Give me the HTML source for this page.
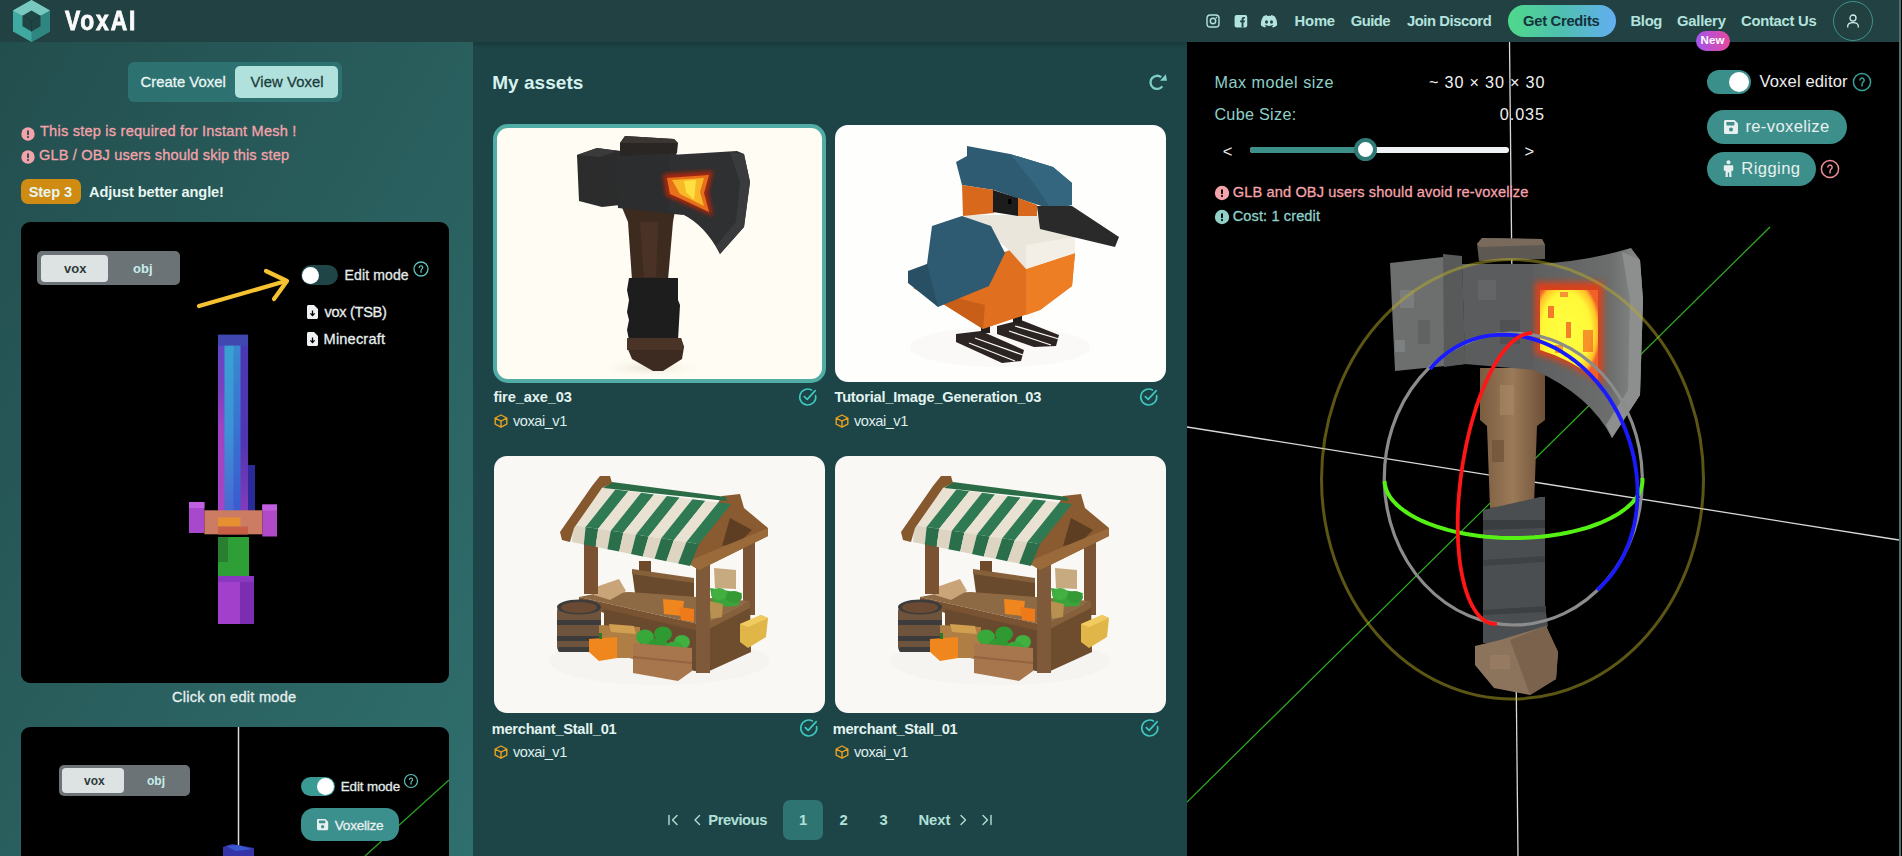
<!DOCTYPE html><html><head><meta charset="utf-8"><style>
*{margin:0;padding:0;box-sizing:border-box}
html,body{width:1902px;height:856px;overflow:hidden;background:#1d4446;font-family:"Liberation Sans",sans-serif}
.a{position:absolute}
.t{position:absolute;line-height:1;white-space:nowrap}
svg{position:absolute;overflow:visible}
</style></head><body>
<div class="a" style="left:0;top:42px;width:473px;height:814px;background:linear-gradient(to bottom right,#234e4e,#2f6f6d)"></div>
<div class="a" style="left:473px;top:42px;width:714px;height:814px;background:#1d4446"></div>
<div class="a" style="left:1187px;top:42px;width:715px;height:814px;background:#000"></div>
<div class="a" style="left:1901px;top:0;width:1px;height:856px;background:#000"></div>
<div class="a" style="left:0;top:0;width:1899px;height:42px;background:#224142"></div>
<div class="a" style="left:1899px;top:0;width:2px;height:856px;background:#4a706d"></div>
<svg style="left:0;top:0" width="60" height="42" viewBox="0 0 60 42">
<polygon points="31.5,0 50,10.5 50,31.5 31.5,42 13,31.5 13,10.5" fill="#3fa9a2"/>
<polygon points="31.5,0 50,10.5 31.5,21 13,10.5" fill="#78c8c0"/>
<polygon points="50,10.5 50,31.5 31.5,42 31.5,21" fill="#2f8580"/>
<polygon points="31.5,10.5 40.5,15.75 40.5,26.25 31.5,31.5 22.5,26.25 22.5,15.75" fill="#1f4444"/>
<polyline points="22.5,15.75 31.5,21 40.5,15.75" fill="none" stroke="#16393a" stroke-width="0.8"/>
<line x1="31.5" y1="21" x2="31.5" y2="31.5" stroke="#16393a" stroke-width="0.8"/>
</svg>
<div class="t" style="left:65px;top:6px;font-size:28.5px;font-weight:700;color:#fafafa;letter-spacing:2.3px;-webkit-text-stroke:0.9px #fafafa;transform:scaleX(0.8);transform-origin:0 0">VoxAI</div>
<svg style="left:1206px;top:14px" width="14" height="14" viewBox="0 0 14 14">
<rect x="1" y="1" width="12" height="12" rx="3.3" fill="none" stroke="#b3e3de" stroke-width="1.4"/>
<circle cx="7" cy="7" r="2.7" fill="none" stroke="#b3e3de" stroke-width="1.4"/>
<circle cx="10.4" cy="3.6" r="0.8" fill="#b3e3de"/></svg>
<svg style="left:1234px;top:14px" width="14" height="14" viewBox="0 0 14 14">
<rect x="0.6" y="1" width="12.6" height="12.4" rx="2" fill="#b3e3de"/>
<path d="M7.6 13.4V8.3H6.1V6.4H7.6V5.1C7.6 3.6 8.4 2.9 9.8 2.9H11V4.6H10.1C9.6 4.6 9.5 4.9 9.5 5.3V6.4H11L10.7 8.3H9.5V13.4Z" fill="#224142"/></svg>
<svg style="left:1260px;top:14px" width="18" height="14" viewBox="0 0 18 14">
<path d="M14.6 2.2A14 14 0 0 0 11.2 1.1L10.8 2A13 13 0 0 0 7.2 2L6.8 1.1A14 14 0 0 0 3.4 2.2C1.3 5.3 0.7 8.4 1 11.4A14 14 0 0 0 5.2 13.5L6.1 12.1A9 9 0 0 1 4.7 11.4L5.1 11.1A10 10 0 0 0 12.9 11.1L13.3 11.4A9 9 0 0 1 11.9 12.1L12.8 13.5A14 14 0 0 0 17 11.4C17.4 7.9 16.5 4.9 14.6 2.2Z" fill="#b3e3de"/>
<ellipse cx="6.5" cy="8" rx="1.5" ry="1.7" fill="#224142"/><ellipse cx="11.5" cy="8" rx="1.5" ry="1.7" fill="#224142"/></svg>
<div class="a" style="left:1508px;top:5px;width:108px;height:32px;border-radius:16px;background:linear-gradient(90deg,#4fd98a,#4fbfb0 50%,#63aef2)"></div>
<div class="a" style="left:1696px;top:31px;width:34px;height:20px;border-radius:10px;background:linear-gradient(90deg,#a455ee,#e5489e)"></div>
<div class="t" style="left:1700.5px;top:35px;font-size:11.5px;font-weight:700;color:#fff;letter-spacing:0.1px">New</div>
<div class="a" style="left:1833px;top:1px;width:40px;height:40px;border-radius:50%;border:1px solid #3c948d;background:#21403f"></div>
<svg style="left:1845px;top:13px" width="16" height="16" viewBox="0 0 16 16">
<circle cx="8" cy="5" r="3" fill="none" stroke="#d0eeea" stroke-width="1.3"/>
<path d="M2.7 14.5V13.3C2.7 11 4.6 9.6 8 9.6S13.3 11 13.3 13.3V14.5" fill="none" stroke="#d0eeea" stroke-width="1.3"/></svg>
<div class="t" style="left:1294.5px;top:13.5px;font-size:14.8px;font-weight:600;color:#b3e3de;letter-spacing:-0.17px;">Home</div>
<div class="t" style="left:1350.7px;top:13.5px;font-size:14.8px;font-weight:600;color:#b3e3de;letter-spacing:-0.53px;">Guide</div>
<div class="t" style="left:1407.0px;top:13.5px;font-size:14.8px;font-weight:600;color:#b3e3de;letter-spacing:-0.45px;">Join Discord</div>
<div class="t" style="left:1523.0px;top:13.5px;font-size:14.8px;font-weight:600;color:#14323a;letter-spacing:-0.30px;">Get Credits</div>
<div class="t" style="left:1630.5px;top:13.5px;font-size:14.8px;font-weight:600;color:#b3e3de;letter-spacing:-0.33px;">Blog</div>
<div class="t" style="left:1677.0px;top:13.5px;font-size:14.8px;font-weight:600;color:#b3e3de;letter-spacing:-0.22px;">Gallery</div>
<div class="t" style="left:1741.0px;top:13.5px;font-size:14.8px;font-weight:600;color:#b3e3de;letter-spacing:-0.27px;">Contact Us</div>
<div class="a" style="left:128px;top:62px;width:214px;height:40px;border-radius:6px;background:#2d7271"></div>
<div class="a" style="left:235px;top:66px;width:103px;height:32px;border-radius:5px;background:#b0e1dc"></div>
<div class="t" style="left:140.5px;top:74.5px;font-size:14.8px;font-weight:500;color:#eaf6f3;letter-spacing:0.05px;-webkit-text-stroke:0.3px #eaf6f3;">Create Voxel</div>
<div class="t" style="left:250.6px;top:74.5px;font-size:14.8px;font-weight:500;color:#1c3b3b;letter-spacing:0.10px;-webkit-text-stroke:0.3px #1c3b3b;">View Voxel</div>
<svg style="left:20px;top:125.5px" width="16" height="16" viewBox="0 0 16 16"><circle cx="8" cy="8" r="6.7" fill="#f4a3ab"/><rect x="7.05" y="4.3" width="1.9" height="4.9" rx="0.9" fill="#24504f"/><circle cx="8" cy="11.1" r="1.05" fill="#24504f"/></svg>
<svg style="left:20px;top:149.3px" width="16" height="16" viewBox="0 0 16 16"><circle cx="8" cy="8" r="6.7" fill="#f4a3ab"/><rect x="7.05" y="4.3" width="1.9" height="4.9" rx="0.9" fill="#24504f"/><circle cx="8" cy="11.1" r="1.05" fill="#24504f"/></svg>
<div class="t" style="left:40.0px;top:124.2px;font-size:14.6px;font-weight:500;color:#f4a3ab;letter-spacing:0.21px;-webkit-text-stroke:0.3px #f4a3ab;">This step is required for Instant Mesh !</div>
<div class="t" style="left:39.0px;top:148.3px;font-size:14.6px;font-weight:500;color:#f4a3ab;letter-spacing:0.14px;-webkit-text-stroke:0.3px #f4a3ab;">GLB / OBJ users should skip this step</div>
<div class="a" style="left:21px;top:179px;width:60px;height:25px;border-radius:7px;background:#d08b12"></div>
<div class="t" style="left:28.7px;top:184.6px;font-size:14.6px;font-weight:700;color:#e6f6f0;letter-spacing:-0.08px;">Step 3</div>
<div class="t" style="left:89.0px;top:184.6px;font-size:14.6px;font-weight:700;color:#e6f6f0;letter-spacing:-0.11px;">Adjust better angle!</div>
<div class="a" style="left:21px;top:222px;width:428px;height:461px;border-radius:9px;background:#000"></div>
<div class="a" style="left:37px;top:251px;width:143px;height:34px;border-radius:5px;background:#6b7377"></div>
<div class="a" style="left:41px;top:254.5px;width:67px;height:27.5px;border-radius:4px;background:#dde3e3"></div>
<div class="t" style="left:64px;top:262px;font-size:13px;font-weight:700;color:#2d3b3c">vox</div>
<div class="t" style="left:133px;top:262px;font-size:13px;font-weight:700;color:#c8ecea">obj</div>
<div class="a" style="left:301px;top:265px;width:37px;height:20px;border-radius:10px;background:#1f4546"></div>
<div class="a" style="left:302px;top:266.5px;width:17px;height:17px;border-radius:50%;background:#fff"></div>
<div class="t" style="left:344.5px;top:267.7px;font-size:14px;font-weight:500;color:#e3eaea;letter-spacing:0.14px;-webkit-text-stroke:0.3px #e3eaea;">Edit mode</div>
<svg style="left:411px;top:258.5px" width="20" height="20" viewBox="0 0 20 20"><circle cx="10" cy="10" r="7" fill="none" stroke="#5fc3bb" stroke-width="1.3"/><path d="M8.25 8.43a1.75 1.75 0 1 1 2.62 1.66c-0.88 0.53-0.88 1.05-0.88 2.27" fill="none" stroke="#5fc3bb" stroke-width="1.23" stroke-linecap="round"/><circle cx="10" cy="13.15" r="0.72" fill="#5fc3bb"/></svg>
<svg style="left:0;top:0" width="473" height="856" viewBox="0 0 473 856">
<g stroke="#f6c232" stroke-width="4.2" stroke-linecap="round" stroke-linejoin="round" fill="none">
<line x1="199" y1="306" x2="286" y2="281"/><polyline points="266,271 287,281 274,299"/></g></svg>
<svg style="left:307px;top:305px" width="11" height="14" viewBox="0 0 11 14"><path d="M1.5 0H7L11 4V12.5C11 13.3 10.3 14 9.5 14H1.5C0.7 14 0 13.3 0 12.5V1.5C0 0.7 0.7 0 1.5 0Z" fill="#eef2f2"/><path d="M5.5 5.5V10.3M3.4 8.4L5.5 10.5L7.6 8.4" stroke="#000" stroke-width="1.3" fill="none"/></svg>
<div class="t" style="left:324.6px;top:304.8px;font-size:14.6px;font-weight:500;color:#e8eeee;letter-spacing:-0.33px;-webkit-text-stroke:0.3px #e8eeee;">vox (TSB)</div>
<svg style="left:307px;top:332px" width="11" height="14" viewBox="0 0 11 14"><path d="M1.5 0H7L11 4V12.5C11 13.3 10.3 14 9.5 14H1.5C0.7 14 0 13.3 0 12.5V1.5C0 0.7 0.7 0 1.5 0Z" fill="#eef2f2"/><path d="M5.5 5.5V10.3M3.4 8.4L5.5 10.5L7.6 8.4" stroke="#000" stroke-width="1.3" fill="none"/></svg>
<div class="t" style="left:323.6px;top:331.6px;font-size:14.6px;font-weight:500;color:#e8eeee;letter-spacing:0.17px;-webkit-text-stroke:0.3px #e8eeee;">Minecraft</div>
<svg style="left:0;top:0" width="473" height="856" viewBox="0 0 473 856">
<defs>
<linearGradient id="swl" x1="0" x2="0" y1="0" y2="1"><stop offset="0" stop-color="#5a48c8"/><stop offset="0.3" stop-color="#7a40c0"/><stop offset="0.5" stop-color="#a042c4"/><stop offset="1" stop-color="#a844c8"/></linearGradient>
<linearGradient id="swc" x1="0" x2="0" y1="0" y2="1"><stop offset="0" stop-color="#38a2d2"/><stop offset="0.5" stop-color="#3c92d6"/><stop offset="1" stop-color="#4a64d0"/></linearGradient>
<linearGradient id="swc2" x1="0" x2="0" y1="0" y2="1"><stop offset="0" stop-color="#3a88d0"/><stop offset="1" stop-color="#3a5ad0"/></linearGradient>
<linearGradient id="swr" x1="0" x2="0" y1="0" y2="1"><stop offset="0" stop-color="#4a38b4"/><stop offset="0.6" stop-color="#5036b0"/><stop offset="1" stop-color="#8a3cbc"/></linearGradient>
</defs>
<rect x="218" y="335" width="7.5" height="183" fill="url(#swl)"/>
<rect x="224.5" y="345" width="9.5" height="173" fill="url(#swc)"/>
<rect x="233.5" y="345" width="7.5" height="173" fill="url(#swc2)"/>
<rect x="240.5" y="335" width="7.6" height="183" fill="url(#swr)"/>
<rect x="218" y="334.6" width="30" height="11" fill="#4048b0"/>
<rect x="248" y="465" width="7" height="53" fill="#2a2a98"/>
<rect x="189" y="502" width="15.4" height="31" fill="#a848cc"/>
<rect x="189" y="502" width="15.4" height="6" fill="#c060e0"/>
<rect x="262.3" y="504.5" width="14.7" height="32" fill="#b04ac8"/>
<rect x="262.3" y="504.5" width="14.7" height="6" fill="#c060e0"/>
<rect x="204.4" y="510.3" width="57.9" height="24" fill="#cc7c62"/>
<rect x="218" y="517.5" width="22.5" height="9" fill="#e69032"/>
<rect x="218" y="526.5" width="30" height="8" fill="#c86048"/>
<rect x="218" y="537" width="31" height="41" fill="#2e9e36"/>
<rect x="218" y="537" width="10" height="25" fill="#2a7e30"/>
<rect x="218" y="576" width="36" height="48" fill="#a23fcb"/>
<rect x="240" y="576" width="14" height="48" fill="#7b2eb0"/>
<rect x="218" y="576" width="36" height="6" fill="#8a38c0"/>
</svg>
<div class="t" style="left:172.0px;top:689.6px;font-size:14.6px;font-weight:500;color:#e6f0ef;letter-spacing:0.24px;-webkit-text-stroke:0.3px #e6f0ef;">Click on edit mode</div>
<div class="a" style="left:21px;top:727px;width:428px;height:140px;border-radius:9px;background:#000;overflow:hidden"></div>
<svg style="left:0;top:0" width="473" height="856" viewBox="0 0 473 856">
<line x1="238.5" y1="727" x2="238.5" y2="849" stroke="#d9d9d9" stroke-width="1.5"/>
<line x1="449" y1="780" x2="365" y2="856" stroke="#2aa020" stroke-width="1.3"/>
<polygon points="223,847 232,844 254,848 254,856 223,856" fill="#3434a8"/><polygon points="226,846 238,845 252,849 236,851" fill="#3a58d0"/>
</svg>
<div class="a" style="left:59px;top:765px;width:130.5px;height:31px;border-radius:5px;background:#6b7377"></div>
<div class="a" style="left:62px;top:768px;width:62px;height:25px;border-radius:4px;background:#dde3e3"></div>
<div class="t" style="left:84px;top:775px;font-size:12px;font-weight:700;color:#2d3b3c">vox</div>
<div class="t" style="left:147px;top:775px;font-size:12px;font-weight:700;color:#c8ecea">obj</div>
<div class="a" style="left:301px;top:777px;width:34px;height:19px;border-radius:10px;background:#3a9a94"></div>
<div class="a" style="left:317px;top:778px;width:17px;height:17px;border-radius:50%;background:#fff"></div>
<div class="t" style="left:340.8px;top:779.7px;font-size:13.4px;font-weight:500;color:#e3eaea;letter-spacing:-0.12px;-webkit-text-stroke:0.3px #e3eaea;">Edit mode</div>
<svg style="left:401.3px;top:771px" width="20" height="20" viewBox="0 0 20 20"><circle cx="10" cy="10" r="6.5" fill="none" stroke="#5fc3bb" stroke-width="1.2"/><path d="M8.38 8.54a1.62 1.62 0 1 1 2.44 1.54c-0.81 0.49-0.81 0.97-0.81 2.11" fill="none" stroke="#5fc3bb" stroke-width="1.14" stroke-linecap="round"/><circle cx="10" cy="12.93" r="0.66" fill="#5fc3bb"/></svg>
<div class="a" style="left:301px;top:808px;width:98px;height:32.5px;border-radius:13px;background:#3b8f8c"></div>
<svg style="left:317px;top:819.3px" width="11.2" height="11.2" viewBox="0 0 14 14"><path d="M1.5 0H10.5L14 3.5V12.5C14 13.3 13.3 14 12.5 14H1.5C0.7 14 0 13.3 0 12.5V1.5C0 0.7 0.7 0 1.5 0Z" fill="#e8f0ef"/><rect x="2.4" y="2" width="8" height="3.4" rx="0.6" fill="#3b8f8c"/><circle cx="7" cy="9.6" r="2" fill="#3b8f8c"/></svg>
<div class="t" style="left:334.8px;top:818.5px;font-size:13.6px;font-weight:500;color:#e8f0ef;letter-spacing:-0.26px;-webkit-text-stroke:0.3px #e8f0ef;">Voxelize</div>
<div class="a" style="left:473px;top:42px;width:714px;height:6px;background:linear-gradient(#183a3b,rgba(29,68,70,0))"></div>
<div class="t" style="left:492.2px;top:72.9px;font-size:19px;font-weight:700;color:#d5f2ee;letter-spacing:0.04px;">My assets</div>
<svg style="left:1149px;top:73px" width="18" height="18" viewBox="0 0 18 18">
<path d="M12.2 4.2A6.6 6.6 0 1 0 13.3 13.4" fill="none" stroke="#7fcfc8" stroke-width="2.3"/>
<polygon points="11,7.7 18,7.7 16.8,1.2" fill="#7fcfc8"/></svg>
<div class="a" style="left:493px;top:124px;width:333px;height:259px;border-radius:15px;background:#fffcf3;border:4px solid #52aca6;overflow:hidden"></div>

<svg style="left:497px;top:128px" width="325" height="251" viewBox="497 128 325 251">
<defs><filter id="cg1" x="-40%" y="-40%" width="180%" height="180%"><feGaussianBlur stdDeviation="2.2"/></filter>
<radialGradient id="sh1" cx="0.5" cy="0.5" r="0.5"><stop offset="0" stop-color="#e8e2d4"/><stop offset="1" stop-color="#fffcf3" stop-opacity="0"/></radialGradient></defs>
<ellipse cx="650" cy="368" rx="55" ry="10" fill="url(#sh1)"/>
<!-- handle brown -->
<polygon points="621,205 676,205 673,222 668,280 632,280 628,222" fill="#3e2b20"/>
<polygon points="640,222 658,222 656,277 644,277" fill="#4d3628" opacity="0.8"/>
<!-- wrap -->
<polygon points="629,278 678,278 678,300 680,305 678,340 629,340 627,330 629,320 627,312 629,300 627,290" fill="#1d1d1d"/>
<!-- pommel -->
<polygon points="627,338 681,338 684,347 682,359 663,371 653,371 632,359 627,347" fill="#3d2b21"/>
<polygon points="627,338 681,338 684,347 682,350 627,350" fill="#4a3427"/>
<!-- butt -->
<polygon points="577,155 597,148 620,151 620,205 602,207 579,201" fill="#2c2c2d"/>
<polygon points="577,155 597,148 619,151 600,157" fill="#3a3a3a"/>
<!-- center -->
<polygon points="614,151 676,150 683,215 618,208" fill="#2b2d2f"/>
<!-- blade -->
<path d="M670,155 Q705,153 737,151 L744,154 L750,182 L744,227 L720,254 Q705,225 682,214 L670,212 Z" fill="#2f3032"/>
<path d="M730,152 L744,154 L750,182 L744,227 L720,254 L716,246 L736,222 L740,182 Z" fill="#3a3b3d"/>
<!-- fire -->
<polygon points="663,174 713,171 708,193 713,216 676,200 666,196" fill="#a8280a" filter="url(#cg1)"/>
<polygon points="667,178 709,175 704,193 709,212 677,197 670,194" fill="#e8701a"/>
<polygon points="672,180 704,178 700,192 704,206 680,194" fill="#f8b828"/><polygon points="684,181 696,180 694,200 686,192" fill="#ffe040"/>
<!-- top cap -->
<polygon points="620,143 625,136 674,139 678,143 677,153 620,156" fill="#2a2624"/>
<polygon points="620,143 625,136 674,139 678,143" fill="#3b3632"/>
</svg>
<div class="a" style="left:835px;top:125px;width:331px;height:257px;border-radius:13px;background:#fefefd;overflow:hidden"></div>

<svg style="left:835px;top:125px" width="331" height="257" viewBox="0 0 331 257">
<ellipse cx="165" cy="222" rx="90" ry="20" fill="#f6f5f3" opacity="0.6"/>
<!-- legs -->
<polygon points="162,201 186,195 224,210 221,221 199,222 162,209" fill="#2b2422"/>
<polygon points="121,209 146,206 189,225 186,236 167,238 121,217" fill="#2b2422"/>
<rect x="146" y="194" width="9" height="14" fill="#231d1b"/>
<g stroke="#f8f7f4" stroke-width="1.3"><line x1="140" y1="213" x2="188" y2="230"/><line x1="134" y1="218" x2="180" y2="236"/><line x1="180" y1="201" x2="224" y2="214"/><line x1="174" y1="206" x2="216" y2="220"/></g>
<rect x="178" y="186" width="9" height="12" fill="#231d1b"/>
<!-- orange body -->
<polygon points="175,125 240,128 237,161 205,185 148,204 105,177 78,163 95,155" fill="#e07020"/>
<polygon points="191,140 240,128 237,161 205,185 191,190" fill="#ee7e24"/>
<polygon points="110,170 150,180 148,204 105,177" fill="#c85e18"/>
<!-- white throat -->
<polygon points="128,90 202,90 240,112 240,128 191,144 175,126 146,101" fill="#ebe6dc"/>
<polygon points="191,120 240,112 240,128 191,144" fill="#f3efe7"/>
<!-- head -->
<polygon points="132,21 175,29 218,42 237,58 237,80 216,84 194,77 159,65 127,60 121,37 132,31" fill="#2e5a72"/>
<polygon points="175,29 218,42 237,58 237,80 216,84 200,60" fill="#356680"/>
<!-- orange face -->
<polygon points="127,60 159,65 159,88 128,91" fill="#d8681c"/>
<polygon points="183,73 202,80 202,91 183,91" fill="#d8681c"/>
<!-- eye stripe -->
<polygon points="158,65 183,73 183,91 158,87" fill="#1c1c1c"/>
<rect x="173" y="74" width="3.5" height="5" fill="#000"/>
<!-- beak -->
<polygon points="202,81 237,81 284,112 280,122 205,104" fill="#2a2a2a"/>
<!-- wing -->
<polygon points="97,101 127,91 156,101 170,128 154,161 103,182 73,152 92,139" fill="#2e5a72"/>
<polygon points="73,146 92,139 103,182 73,158" fill="#284f64"/>
</svg>
<div class="a" style="left:494px;top:456px;width:331px;height:257px;border-radius:13px;background:#f9f8f5;overflow:hidden"></div>
<div class="a" style="left:835px;top:456px;width:331px;height:257px;border-radius:13px;background:#f9f8f5;overflow:hidden"></div>

<svg style="left:494px;top:456px" width="331" height="257" viewBox="0 0 331 257">
<g>
<ellipse cx="165" cy="205" rx="110" ry="24" fill="#efeeea" opacity="0.35"/>
<!-- back posts -->
<rect x="249" y="84" width="12" height="75" fill="#7a5434"/>
<rect x="145" y="105" width="12" height="14" fill="#6e4a2a"/>
<!-- back shelf -->
<polygon points="138,115 200,124 200,143 141,137" fill="#6a4a2c"/>
<polygon points="138,113 200,122 200,127 138,118" fill="#86603a"/>
<!-- goods behind counter -->
<polygon points="220,112 242,114 242,133 221,132" fill="#c8aa80"/>
<!-- counter top -->
<polygon points="85,141 105,137 136,136 256,145 209,169" fill="#8e6a44"/>
<!-- counter faces -->
<polygon points="85,141 209,169 209,180 110,157 85,147" fill="#7a5432"/>
<polygon points="110,153 209,176 211,217 110,197" fill="#6a4a2e"/>
<polygon points="209,169 256,145 257,196 211,217" fill="#6e4c2e"/>
<polygon points="209,169 256,145 256,152 209,176" fill="#86603a"/>
<!-- right goods -->
<polygon points="216,132 248,137 244,150 220,151" fill="#3aa43a"/>
<ellipse cx="225" cy="138" rx="8" ry="6" fill="#42b040"/>
<ellipse cx="240" cy="141" rx="8" ry="6" fill="#349a36"/>
<polygon points="215,145 229,148 228,161 217,163" fill="#b89050"/>
<!-- oranges -->
<polygon points="169,143 190,145 188,160 170,158" fill="#f0861e"/>
<polygon points="185,151 200,153 200,166 187,164" fill="#ee7a1a"/>
<!-- bread -->
<polygon points="99,132 125,123 132,135 116,144 100,139" fill="#c8a478"/>
<!-- posts -->
<rect x="90" y="88" width="14" height="50" fill="#7a5232"/>
<rect x="202" y="106" width="14" height="111" fill="#7e5a3a"/>
<!-- barrel -->
<rect x="63" y="150" width="44" height="46" rx="5" fill="#6e543c"/>
<ellipse cx="85" cy="151" rx="22" ry="7.5" fill="#3c3c3c"/>
<ellipse cx="85" cy="151.5" rx="18" ry="5.5" fill="#6a4a32"/>
<rect x="63" y="164" width="44" height="5" fill="#3c3c3c"/>
<rect x="63" y="180" width="44" height="5" fill="#3c3c3c"/>
<rect x="64" y="191" width="42" height="5" rx="2" fill="#3c3c3c"/>
<!-- basket -->
<polygon points="105,169 146,171 146,202 121,202 105,190" fill="#ae7e44"/>
<polygon points="115,168 140,170 142,178 117,176" fill="#d0a050"/>
<!-- crate + greens -->
<ellipse cx="151" cy="181" rx="9" ry="7.5" fill="#38a83a"/>
<ellipse cx="169" cy="178" rx="9" ry="7.5" fill="#2f9a32"/>
<ellipse cx="188" cy="186" rx="8" ry="7" fill="#40b040"/>
<ellipse cx="164" cy="189" rx="10" ry="7" fill="#2f9a32"/>
<ellipse cx="180" cy="192" rx="9" ry="6.5" fill="#38a83a"/>
<polygon points="139,187 198,192 198,215 184,225 139,217" fill="#a8764c"/>
<polygon points="139,200 198,206 198,208 139,202" fill="#946440"/>
<!-- pumpkin -->
<polygon points="95,183 123,181 123,202 105,205 95,196" fill="#f0861e"/>
<rect x="105" y="177" width="3" height="6" fill="#2a7a20"/>
<!-- hay -->
<polygon points="246,168 267,159 274,162 272,181 254,192 246,186" fill="#e0b648"/>
<polygon points="246,168 267,159 274,162 254,171" fill="#f0cc60"/>
<!-- gable / right frame -->
<polygon points="228,40 246,38 250,52 262,62 274,72 274,80 205,114 192,106 218,58" fill="#8a5a30"/>
<polygon points="236,62 258,74 246,86 228,90" fill="#5e3e22"/>
<polygon points="192,106 274,72 274,80 205,114" fill="#9a6a3a"/>
<!-- awning -->
<polygon points="108.6,32.0 121.4,33.6 91.6,70.9 79.0,69.0" fill="#e9e1d1"/>
<polygon points="79.0,69.0 91.6,70.9 89.8,88.4 78.0,86.0" fill="#ddd4c2"/>
<polygon points="121.4,33.6 134.3,35.2 104.2,72.8 91.6,70.9" fill="#2f7a52"/>
<polygon points="91.6,70.9 104.2,72.8 101.6,90.8 89.8,88.4" fill="#2a6e4a"/>
<polygon points="134.3,35.2 147.1,36.8 116.8,74.7 104.2,72.8" fill="#e9e1d1"/>
<polygon points="104.2,72.8 116.8,74.7 113.4,93.2 101.6,90.8" fill="#ddd4c2"/>
<polygon points="147.1,36.8 160.0,38.4 129.4,76.6 116.8,74.7" fill="#2f7a52"/>
<polygon points="116.8,74.7 129.4,76.6 125.2,95.6 113.4,93.2" fill="#2a6e4a"/>
<polygon points="160.0,38.4 172.8,40.0 142.0,78.5 129.4,76.6" fill="#e9e1d1"/>
<polygon points="129.4,76.6 142.0,78.5 137.0,98.0 125.2,95.6" fill="#ddd4c2"/>
<polygon points="172.8,40.0 185.7,41.6 154.6,80.4 142.0,78.5" fill="#2f7a52"/>
<polygon points="142.0,78.5 154.6,80.4 148.8,100.4 137.0,98.0" fill="#2a6e4a"/>
<polygon points="185.7,41.6 198.5,43.2 167.2,82.3 154.6,80.4" fill="#e9e1d1"/>
<polygon points="154.6,80.4 167.2,82.3 160.6,102.8 148.8,100.4" fill="#ddd4c2"/>
<polygon points="198.5,43.2 211.4,44.8 179.8,84.2 167.2,82.3" fill="#2f7a52"/>
<polygon points="167.2,82.3 179.8,84.2 172.4,105.2 160.6,102.8" fill="#2a6e4a"/>
<polygon points="211.4,44.8 224.2,46.4 192.4,86.1 179.8,84.2" fill="#e9e1d1"/>
<polygon points="179.8,84.2 192.4,86.1 184.2,107.6 172.4,105.2" fill="#ddd4c2"/>
<polygon points="224.2,46.4 237.1,48.0 205.0,88.0 192.4,86.1" fill="#2f7a52"/>
<polygon points="192.4,86.1 205.0,88.0 196.0,110.0 184.2,107.6" fill="#2a6e4a"/>
<polygon points="118,26 232,41 233,45 109,32" fill="#2b6c46"/>
<!-- left stair edge -->
<polygon points="106,20 116,20 118,27 108,32 80,72 76,86 68,84 66,76 98,30" fill="#86582e"/>
</g></svg>
<svg style="left:835px;top:456px" width="331" height="257" viewBox="0 0 331 257">
<g>
<ellipse cx="165" cy="205" rx="110" ry="24" fill="#efeeea" opacity="0.35"/>
<!-- back posts -->
<rect x="249" y="84" width="12" height="75" fill="#7a5434"/>
<rect x="145" y="105" width="12" height="14" fill="#6e4a2a"/>
<!-- back shelf -->
<polygon points="138,115 200,124 200,143 141,137" fill="#6a4a2c"/>
<polygon points="138,113 200,122 200,127 138,118" fill="#86603a"/>
<!-- goods behind counter -->
<polygon points="220,112 242,114 242,133 221,132" fill="#c8aa80"/>
<!-- counter top -->
<polygon points="85,141 105,137 136,136 256,145 209,169" fill="#8e6a44"/>
<!-- counter faces -->
<polygon points="85,141 209,169 209,180 110,157 85,147" fill="#7a5432"/>
<polygon points="110,153 209,176 211,217 110,197" fill="#6a4a2e"/>
<polygon points="209,169 256,145 257,196 211,217" fill="#6e4c2e"/>
<polygon points="209,169 256,145 256,152 209,176" fill="#86603a"/>
<!-- right goods -->
<polygon points="216,132 248,137 244,150 220,151" fill="#3aa43a"/>
<ellipse cx="225" cy="138" rx="8" ry="6" fill="#42b040"/>
<ellipse cx="240" cy="141" rx="8" ry="6" fill="#349a36"/>
<polygon points="215,145 229,148 228,161 217,163" fill="#b89050"/>
<!-- oranges -->
<polygon points="169,143 190,145 188,160 170,158" fill="#f0861e"/>
<polygon points="185,151 200,153 200,166 187,164" fill="#ee7a1a"/>
<!-- bread -->
<polygon points="99,132 125,123 132,135 116,144 100,139" fill="#c8a478"/>
<!-- posts -->
<rect x="90" y="88" width="14" height="50" fill="#7a5232"/>
<rect x="202" y="106" width="14" height="111" fill="#7e5a3a"/>
<!-- barrel -->
<rect x="63" y="150" width="44" height="46" rx="5" fill="#6e543c"/>
<ellipse cx="85" cy="151" rx="22" ry="7.5" fill="#3c3c3c"/>
<ellipse cx="85" cy="151.5" rx="18" ry="5.5" fill="#6a4a32"/>
<rect x="63" y="164" width="44" height="5" fill="#3c3c3c"/>
<rect x="63" y="180" width="44" height="5" fill="#3c3c3c"/>
<rect x="64" y="191" width="42" height="5" rx="2" fill="#3c3c3c"/>
<!-- basket -->
<polygon points="105,169 146,171 146,202 121,202 105,190" fill="#ae7e44"/>
<polygon points="115,168 140,170 142,178 117,176" fill="#d0a050"/>
<!-- crate + greens -->
<ellipse cx="151" cy="181" rx="9" ry="7.5" fill="#38a83a"/>
<ellipse cx="169" cy="178" rx="9" ry="7.5" fill="#2f9a32"/>
<ellipse cx="188" cy="186" rx="8" ry="7" fill="#40b040"/>
<ellipse cx="164" cy="189" rx="10" ry="7" fill="#2f9a32"/>
<ellipse cx="180" cy="192" rx="9" ry="6.5" fill="#38a83a"/>
<polygon points="139,187 198,192 198,215 184,225 139,217" fill="#a8764c"/>
<polygon points="139,200 198,206 198,208 139,202" fill="#946440"/>
<!-- pumpkin -->
<polygon points="95,183 123,181 123,202 105,205 95,196" fill="#f0861e"/>
<rect x="105" y="177" width="3" height="6" fill="#2a7a20"/>
<!-- hay -->
<polygon points="246,168 267,159 274,162 272,181 254,192 246,186" fill="#e0b648"/>
<polygon points="246,168 267,159 274,162 254,171" fill="#f0cc60"/>
<!-- gable / right frame -->
<polygon points="228,40 246,38 250,52 262,62 274,72 274,80 205,114 192,106 218,58" fill="#8a5a30"/>
<polygon points="236,62 258,74 246,86 228,90" fill="#5e3e22"/>
<polygon points="192,106 274,72 274,80 205,114" fill="#9a6a3a"/>
<!-- awning -->
<polygon points="108.6,32.0 121.4,33.6 91.6,70.9 79.0,69.0" fill="#e9e1d1"/>
<polygon points="79.0,69.0 91.6,70.9 89.8,88.4 78.0,86.0" fill="#ddd4c2"/>
<polygon points="121.4,33.6 134.3,35.2 104.2,72.8 91.6,70.9" fill="#2f7a52"/>
<polygon points="91.6,70.9 104.2,72.8 101.6,90.8 89.8,88.4" fill="#2a6e4a"/>
<polygon points="134.3,35.2 147.1,36.8 116.8,74.7 104.2,72.8" fill="#e9e1d1"/>
<polygon points="104.2,72.8 116.8,74.7 113.4,93.2 101.6,90.8" fill="#ddd4c2"/>
<polygon points="147.1,36.8 160.0,38.4 129.4,76.6 116.8,74.7" fill="#2f7a52"/>
<polygon points="116.8,74.7 129.4,76.6 125.2,95.6 113.4,93.2" fill="#2a6e4a"/>
<polygon points="160.0,38.4 172.8,40.0 142.0,78.5 129.4,76.6" fill="#e9e1d1"/>
<polygon points="129.4,76.6 142.0,78.5 137.0,98.0 125.2,95.6" fill="#ddd4c2"/>
<polygon points="172.8,40.0 185.7,41.6 154.6,80.4 142.0,78.5" fill="#2f7a52"/>
<polygon points="142.0,78.5 154.6,80.4 148.8,100.4 137.0,98.0" fill="#2a6e4a"/>
<polygon points="185.7,41.6 198.5,43.2 167.2,82.3 154.6,80.4" fill="#e9e1d1"/>
<polygon points="154.6,80.4 167.2,82.3 160.6,102.8 148.8,100.4" fill="#ddd4c2"/>
<polygon points="198.5,43.2 211.4,44.8 179.8,84.2 167.2,82.3" fill="#2f7a52"/>
<polygon points="167.2,82.3 179.8,84.2 172.4,105.2 160.6,102.8" fill="#2a6e4a"/>
<polygon points="211.4,44.8 224.2,46.4 192.4,86.1 179.8,84.2" fill="#e9e1d1"/>
<polygon points="179.8,84.2 192.4,86.1 184.2,107.6 172.4,105.2" fill="#ddd4c2"/>
<polygon points="224.2,46.4 237.1,48.0 205.0,88.0 192.4,86.1" fill="#2f7a52"/>
<polygon points="192.4,86.1 205.0,88.0 196.0,110.0 184.2,107.6" fill="#2a6e4a"/>
<polygon points="118,26 232,41 233,45 109,32" fill="#2b6c46"/>
<!-- left stair edge -->
<polygon points="106,20 116,20 118,27 108,32 80,72 76,86 68,84 66,76 98,30" fill="#86582e"/>
</g></svg>
<svg style="left:798px;top:387px" width="20" height="20" viewBox="0 0 20 20"><path d="M17.6 8.6A8 8 0 1 1 13.5 3" fill="none" stroke="#3ec8bf" stroke-width="1.6" stroke-linecap="round"/><path d="M6.3 9.6L9.2 12.4L17.2 3.6" fill="none" stroke="#3ec8bf" stroke-width="1.7" stroke-linecap="round" stroke-linejoin="round"/></svg>
<svg style="left:1139px;top:387px" width="20" height="20" viewBox="0 0 20 20"><path d="M17.6 8.6A8 8 0 1 1 13.5 3" fill="none" stroke="#3ec8bf" stroke-width="1.6" stroke-linecap="round"/><path d="M6.3 9.6L9.2 12.4L17.2 3.6" fill="none" stroke="#3ec8bf" stroke-width="1.7" stroke-linecap="round" stroke-linejoin="round"/></svg>
<svg style="left:798.5px;top:718px" width="20" height="20" viewBox="0 0 20 20"><path d="M17.6 8.6A8 8 0 1 1 13.5 3" fill="none" stroke="#3ec8bf" stroke-width="1.6" stroke-linecap="round"/><path d="M6.3 9.6L9.2 12.4L17.2 3.6" fill="none" stroke="#3ec8bf" stroke-width="1.7" stroke-linecap="round" stroke-linejoin="round"/></svg>
<svg style="left:1139.5px;top:718px" width="20" height="20" viewBox="0 0 20 20"><path d="M17.6 8.6A8 8 0 1 1 13.5 3" fill="none" stroke="#3ec8bf" stroke-width="1.6" stroke-linecap="round"/><path d="M6.3 9.6L9.2 12.4L17.2 3.6" fill="none" stroke="#3ec8bf" stroke-width="1.7" stroke-linecap="round" stroke-linejoin="round"/></svg>
<svg style="left:494px;top:414px" width="14" height="14" viewBox="0 0 14 14"><path d="M7 1L12.8 4V10.2L7 13.2L1.2 10.2V4Z M1.2 4L7 7.1L12.8 4 M7 7.1V13.2" fill="none" stroke="#e8a020" stroke-width="1.4" stroke-linejoin="round"/></svg>
<svg style="left:835px;top:414px" width="14" height="14" viewBox="0 0 14 14"><path d="M7 1L12.8 4V10.2L7 13.2L1.2 10.2V4Z M1.2 4L7 7.1L12.8 4 M7 7.1V13.2" fill="none" stroke="#e8a020" stroke-width="1.4" stroke-linejoin="round"/></svg>
<svg style="left:494px;top:745px" width="14" height="14" viewBox="0 0 14 14"><path d="M7 1L12.8 4V10.2L7 13.2L1.2 10.2V4Z M1.2 4L7 7.1L12.8 4 M7 7.1V13.2" fill="none" stroke="#e8a020" stroke-width="1.4" stroke-linejoin="round"/></svg>
<svg style="left:835px;top:745px" width="14" height="14" viewBox="0 0 14 14"><path d="M7 1L12.8 4V10.2L7 13.2L1.2 10.2V4Z M1.2 4L7 7.1L12.8 4 M7 7.1V13.2" fill="none" stroke="#e8a020" stroke-width="1.4" stroke-linejoin="round"/></svg>
<div class="t" style="left:493.4px;top:389.6px;font-size:14.6px;font-weight:700;color:#e2f3f0;letter-spacing:-0.10px;">fire_axe_03</div>
<div class="t" style="left:834.5px;top:389.6px;font-size:14.6px;font-weight:700;color:#e2f3f0;letter-spacing:-0.20px;">Tutorial_Image_Generation_03</div>
<div class="t" style="left:491.8px;top:721.6px;font-size:14.6px;font-weight:700;color:#e2f3f0;letter-spacing:-0.26px;">merchant_Stall_01</div>
<div class="t" style="left:832.8px;top:721.6px;font-size:14.6px;font-weight:700;color:#e2f3f0;letter-spacing:-0.26px;">merchant_Stall_01</div>
<div class="t" style="left:513.0px;top:413.6px;font-size:14.6px;font-weight:400;color:#dfeeed;letter-spacing:-0.47px;">voxai_v1</div>
<div class="t" style="left:854.0px;top:413.6px;font-size:14.6px;font-weight:400;color:#dfeeed;letter-spacing:-0.47px;">voxai_v1</div>
<div class="t" style="left:513.0px;top:744.6px;font-size:14.6px;font-weight:400;color:#dfeeed;letter-spacing:-0.47px;">voxai_v1</div>
<div class="t" style="left:854.0px;top:744.6px;font-size:14.6px;font-weight:400;color:#dfeeed;letter-spacing:-0.47px;">voxai_v1</div>
<div class="a" style="left:783px;top:800px;width:40px;height:40px;border-radius:7px;background:#2e7472"></div>
<svg style="left:660px;top:810px" width="340" height="20" viewBox="660 810 340 20">
<g fill="none" stroke="#b0e0d8" stroke-width="1.4" stroke-linecap="round" stroke-linejoin="round">
<line x1="669" y1="815.5" x2="669" y2="824.5"/><polyline points="677,815.5 672.5,820 677,824.5"/>
<polyline points="699.5,815.5 695,820 699.5,824.5"/>
<polyline points="961,815.5 965.5,820 961,824.5"/>
<polyline points="983,815.5 987.5,820 983,824.5"/><line x1="991" y1="815.5" x2="991" y2="824.5"/>
</g></svg>
<div class="t" style="left:708.3px;top:812.5px;font-size:14.8px;font-weight:600;color:#b0e0d8;letter-spacing:-0.49px;">Previous</div>
<div class="t" style="left:799.0px;top:812.5px;font-size:14.8px;font-weight:600;color:#b0e0d8;letter-spacing:0.00px;">1</div>
<div class="t" style="left:839.6px;top:812.5px;font-size:14.8px;font-weight:600;color:#b0e0d8;letter-spacing:0.00px;">2</div>
<div class="t" style="left:879.5px;top:812.5px;font-size:14.8px;font-weight:600;color:#b0e0d8;letter-spacing:0.00px;">3</div>
<div class="t" style="left:918.4px;top:812.5px;font-size:14.8px;font-weight:600;color:#b0e0d8;letter-spacing:0.00px;">Next</div>
<svg style="left:1187px;top:42px" width="712" height="814" viewBox="1187 42 712 814">
<defs><clipPath id="rc"><rect x="1187" y="42" width="712" height="814"/></clipPath></defs>
<g clip-path="url(#rc)">
<line x1="1187" y1="427" x2="1899" y2="540" stroke="#d8d8d8" stroke-width="1.3"/>
<line x1="1509.5" y1="42" x2="1518" y2="856" stroke="#d8d8d8" stroke-width="1.3"/>
<line x1="1187" y1="802" x2="1770" y2="227" stroke="#2fb020" stroke-width="1.2"/>

<defs>
<radialGradient id="fire3" cx="0.45" cy="0.45" r="0.6">
<stop offset="0" stop-color="#ffff40"/><stop offset="0.7" stop-color="#fff838"/><stop offset="0.9" stop-color="#ffc028"/><stop offset="1" stop-color="#f06028"/></radialGradient>
<linearGradient id="hdl3" x1="0" x2="1"><stop offset="0" stop-color="#7a5c40"/><stop offset="0.5" stop-color="#9a7a58"/><stop offset="1" stop-color="#6e5038"/></linearGradient>
<linearGradient id="blade3" x1="0" x2="1"><stop offset="0" stop-color="#5e5f60"/><stop offset="0.7" stop-color="#6c6d6d"/><stop offset="1" stop-color="#8a8b8b"/></linearGradient>
<filter id="glow3" x="-30%" y="-30%" width="160%" height="160%"><feGaussianBlur stdDeviation="3"/></filter>
</defs>
<!-- handle brown -->
<polygon points="1480,368 1545,368 1545,420 1537,426 1534,505 1490,508 1487,426 1480,420" fill="url(#hdl3)"/>
<rect x="1500" y="385" width="14" height="30" fill="#a88866" opacity="0.6"/>
<rect x="1492" y="440" width="12" height="22" fill="#6a4e36" opacity="0.6"/>
<!-- dark wrap -->
<polygon points="1483,510 1540,497 1545,497 1545,606 1548,626 1533,646 1483,643" fill="#4b4e50"/>
<polygon points="1483,520 1545,520 1545,528 1483,530" fill="#3a3d3f"/>
<polygon points="1483,560 1545,556 1545,562 1483,566" fill="#3f4244"/>
<polygon points="1483,610 1546,606 1546,612 1483,615" fill="#3d4042"/>
<!-- pommel -->
<polygon points="1475,646 1500,640 1546,626 1558,652 1556,679 1530,695 1494,688 1475,665" fill="#8c735c"/>
<polygon points="1510,640 1546,626 1558,652 1556,679 1530,695" fill="#7a624c"/>
<rect x="1490" y="655" width="20" height="14" fill="#a08468" opacity="0.5"/>
<!-- butt block -->
<polygon points="1390,263 1443,257 1462,264 1465,364 1395,371" fill="#6d6e6e"/>
<polygon points="1443,254 1462,256 1462,266 1465,364 1444,367" fill="#585a5a"/>
<rect x="1400" y="290" width="14" height="18" fill="#7e8080" opacity="0.8"/>
<rect x="1418" y="320" width="12" height="24" fill="#5e6060" opacity="0.8"/>
<rect x="1395" y="340" width="10" height="12" fill="#858787" opacity="0.7"/>
<!-- central block -->
<polygon points="1462,264 1535,264 1535,370 1465,364" fill="#5b5c5d"/>
<rect x="1478" y="280" width="18" height="20" fill="#676869" opacity="0.8"/>
<rect x="1500" y="320" width="20" height="24" fill="#4e4f50" opacity="0.8"/>
<!-- blade -->
<path d="M1534,264 Q1585,262 1631,248 L1640,260 L1643,300 L1640,395 L1612,438 Q1590,395 1534,370 Z" fill="url(#blade3)"/>
<path d="M1622,252 L1640,260 L1643,300 L1640,395 L1612,438 L1606,425 L1628,390 L1630,300 Z" fill="#8d8e8e"/>
<!-- fire -->
<path d="M1535,282 L1603,282 L1603,386 Q1570,362 1535,354 Z" fill="#e04018" filter="url(#glow3)" opacity="0.95"/>
<path d="M1540,290 L1598,290 L1598,380 Q1568,358 1540,350 Z" fill="url(#fire3)"/>
<rect x="1548" y="306" width="6" height="12" fill="#f05a28" opacity="0.8"/><rect x="1560" y="292" width="8" height="5" fill="#f06a30" opacity="0.7"/>
<rect x="1566" y="322" width="5" height="16" fill="#f04a20" opacity="0.7"/><rect x="1583" y="330" width="10" height="22" fill="#f05020" opacity="0.6"/><rect x="1555" y="345" width="8" height="8" fill="#f06020" opacity="0.6"/>
<!-- top cap -->
<polygon points="1477,244 1482,238 1542,239 1545,245 1545,259 1479,261" fill="#5e5853"/>
<polygon points="1477,244 1482,238 1542,239 1545,245 1480,247" fill="#7a6a5c"/>

<ellipse cx="1512.5" cy="479.3" rx="191" ry="219.7" fill="none" stroke="#b8ac28" stroke-opacity="0.5" stroke-width="3"/>
<ellipse cx="1513.3" cy="479" rx="129" ry="146" transform="rotate(-1.3 1513.3 479)" fill="none" stroke="#8c8c8c" stroke-width="3.2"/>

<path d="M1384.5,481.0 L1384.8,484.1 L1385.5,487.2 L1386.5,490.3 L1387.9,493.3 L1389.7,496.3 L1391.8,499.3 L1394.3,502.2 L1397.1,505.0 L1400.2,507.8 L1403.7,510.4 L1407.5,513.0 L1411.6,515.6 L1416.0,518.0 L1420.6,520.2 L1425.5,522.4 L1430.7,524.5 L1436.1,526.4 L1441.8,528.2 L1447.6,529.9 L1453.6,531.4 L1459.8,532.7 L1466.2,534.0 L1472.7,535.0 L1479.3,535.9 L1486.0,536.7 L1492.8,537.2 L1499.6,537.7 L1506.5,537.9 L1513.4,538.0 L1520.3,537.9 L1527.2,537.7 L1534.0,537.3 L1540.8,536.7 L1547.5,535.9 L1554.1,535.0 L1560.6,534.0 L1567.0,532.8 L1573.2,531.4 L1579.2,529.9 L1585.1,528.3 L1590.7,526.5 L1596.1,524.5 L1601.3,522.5 L1606.2,520.3 L1610.9,518.0 L1615.3,515.6 L1619.4,513.1 L1623.2,510.5 L1626.7,507.8 L1629.8,505.1 L1632.6,502.3 L1635.1,499.4 L1637.2,496.4 L1639.0,493.4 L1640.4,490.4 L1641.5,487.3 L1642.2,484.2 L1642.5,481.1 L1642.4,478.0" fill="none" stroke="#55f014" stroke-width="4"/>
<path d="M1430.0,369.0 L1434.4,364.0 L1439.1,359.4 L1444.1,355.2 L1449.3,351.3 L1454.7,347.9 L1460.3,344.8 L1466.1,342.0 L1472.1,339.8 L1478.2,337.9 L1484.4,336.4 L1490.7,335.4 L1497.2,334.8 L1503.7,334.6 L1510.2,334.8 L1516.8,335.5 L1523.3,336.6 L1529.9,338.1 L1536.4,340.1 L1542.9,342.4 L1549.3,345.2 L1555.6,348.3 L1561.8,351.9 L1567.9,355.8 L1573.8,360.1 L1579.6,364.7 L1585.1,369.7 L1590.5,375.0 L1595.6,380.6 L1600.5,386.5 L1605.2,392.6 L1609.6,399.0 L1613.7,405.7 L1617.5,412.5 L1621.0,419.5 L1624.2,426.7 L1627.1,434.1 L1629.6,441.6 L1631.8,449.1 L1633.7,456.8 L1635.1,464.5 L1636.3,472.2 L1637.1,479.9 L1637.5,487.6 L1637.5,495.3 L1637.2,502.9 L1636.5,510.4 L1635.5,517.8 L1634.1,525.1 L1632.3,532.2 L1630.2,539.1 L1627.8,545.8 L1625.0,552.3 L1621.9,558.6 L1618.5,564.6 L1614.7,570.3 L1610.7,575.7 L1606.4,580.8 L1601.8,585.6 L1597.0,590.0" fill="none" stroke="#1a1aff" stroke-width="3.8"/>
<path d="M1532.1,333.1 L1529.3,333.2 L1526.4,333.8 L1523.4,334.7 L1520.4,336.1 L1517.4,337.9 L1514.4,340.1 L1511.4,342.7 L1508.4,345.7 L1505.4,349.1 L1502.5,352.9 L1499.5,357.0 L1496.6,361.5 L1493.8,366.3 L1491.0,371.4 L1488.3,376.9 L1485.6,382.6 L1483.1,388.7 L1480.6,395.0 L1478.2,401.5 L1475.9,408.2 L1473.8,415.2 L1471.7,422.3 L1469.8,429.6 L1468.0,437.1 L1466.3,444.6 L1464.8,452.3 L1463.4,460.0 L1462.1,467.8 L1461.0,475.6 L1460.1,483.5 L1459.3,491.3 L1458.6,499.1 L1458.2,506.8 L1457.8,514.4 L1457.7,521.9 L1457.7,529.3 L1457.9,536.6 L1458.2,543.7 L1458.7,550.6 L1459.3,557.3 L1460.1,563.7 L1461.1,570.0 L1462.2,575.9 L1463.5,581.6 L1464.9,587.0 L1466.4,592.0 L1468.1,596.7 L1470.0,601.1 L1471.9,605.2 L1474.0,608.8 L1476.1,612.1 L1478.4,615.0 L1480.8,617.5 L1483.3,619.6 L1485.9,621.3 L1488.5,622.6 L1491.3,623.4 L1494.1,623.9 L1496.9,623.9" fill="none" stroke="#ff1616" stroke-width="3.8"/>

</g></svg>
<div class="t" style="left:1214.4px;top:74.1px;font-size:16.2px;font-weight:400;color:#8fd0c8;letter-spacing:0.51px;">Max model size</div>
<div class="t" style="left:1429.0px;top:74.1px;font-size:16.2px;font-weight:400;color:#f0f0f0;letter-spacing:0.81px;">~ 30 × 30 × 30</div>
<div class="t" style="left:1214.4px;top:105.9px;font-size:16.2px;font-weight:400;color:#8fd0c8;letter-spacing:0.29px;">Cube Size:</div>
<div class="t" style="left:1499.8px;top:105.9px;font-size:16.2px;font-weight:400;color:#f0f0f0;letter-spacing:0.93px;">0.035</div>
<div class="t" style="left:1222.7px;top:143.0px;font-size:16.5px;font-weight:400;color:#f0f0f0;letter-spacing:0.00px;">&lt;</div>
<div class="t" style="left:1524.6px;top:143.0px;font-size:16.5px;font-weight:400;color:#f0f0f0;letter-spacing:0.00px;">&gt;</div>
<div class="a" style="left:1250px;top:147px;width:259px;height:6px;border-radius:3px;background:#eef2f5"></div>
<div class="a" style="left:1250px;top:147px;width:116px;height:6px;border-radius:3px 0 0 3px;background:#3d8f8a"></div>
<div class="a" style="left:1354.2px;top:138.3px;width:23px;height:23px;border-radius:50%;background:#fff;border:4.3px solid #2d7a76"></div>
<svg style="left:1214px;top:185px" width="16" height="16" viewBox="0 0 16 16"><circle cx="8" cy="8" r="7.2" fill="#f4a3ab"/><rect x="7.05" y="4.3" width="1.9" height="4.9" rx="0.9" fill="#000"/><circle cx="8" cy="11.1" r="1.05" fill="#000"/></svg>
<svg style="left:1214px;top:209.3px" width="16" height="16" viewBox="0 0 16 16"><circle cx="8" cy="8" r="7.2" fill="#8fd0c8"/><rect x="7.05" y="4.3" width="1.9" height="4.9" rx="0.9" fill="#000"/><circle cx="8" cy="11.1" r="1.05" fill="#000"/></svg>
<div class="t" style="left:1232.7px;top:184.6px;font-size:14.6px;font-weight:500;color:#f4a3ab;letter-spacing:0.13px;-webkit-text-stroke:0.3px #f4a3ab;">GLB and OBJ users should avoid re-voxelize</div>
<div class="t" style="left:1232.7px;top:208.6px;font-size:14.6px;font-weight:500;color:#8fd0c8;letter-spacing:0.10px;-webkit-text-stroke:0.3px #8fd0c8;">Cost: 1 credit</div>
<div class="a" style="left:1707px;top:70px;width:44px;height:24px;border-radius:12px;background:#3a8f8a"></div>
<div class="a" style="left:1729px;top:72px;width:20px;height:20px;border-radius:50%;background:#fff"></div>
<div class="t" style="left:1759.5px;top:73.6px;font-size:16.6px;font-weight:400;color:#eeeeee;letter-spacing:0.12px;">Voxel editor</div>
<svg style="left:1852px;top:72px" width="20" height="20" viewBox="0 0 20 20"><circle cx="10" cy="10" r="8.6" fill="none" stroke="#3a9f98" stroke-width="1.5"/><path d="M7.85 8.06a2.15 2.15 0 1 1 3.22 2.04c-1.07 0.64-1.07 1.29-1.07 2.79" fill="none" stroke="#3a9f98" stroke-width="1.42" stroke-linecap="round"/><circle cx="10" cy="13.87" r="0.83" fill="#3a9f98"/></svg>
<div class="a" style="left:1707px;top:110px;width:140px;height:34px;border-radius:17px;background:#3d8f8b"></div>
<svg style="left:1724px;top:120px" width="14" height="14" viewBox="0 0 14 14"><path d="M1.5 0H10.5L14 3.5V12.5C14 13.3 13.3 14 12.5 14H1.5C0.7 14 0 13.3 0 12.5V1.5C0 0.7 0.7 0 1.5 0Z" fill="#e8f0ef"/><rect x="2.4" y="2" width="8" height="3.4" rx="0.6" fill="#3d8f8b"/><circle cx="7" cy="9.6" r="2" fill="#3d8f8b"/></svg>
<div class="t" style="left:1745.4px;top:118.6px;font-size:16.6px;font-weight:400;color:#e8f0ef;letter-spacing:0.36px;">re-voxelize</div>
<div class="a" style="left:1707px;top:152px;width:109px;height:34px;border-radius:17px;background:#3d8f8b"></div>
<svg style="left:1722px;top:160px" width="13" height="18" viewBox="0 0 13 18">
<circle cx="6.5" cy="2.3" r="2" fill="#e8f0ef"/>
<path d="M3 5.2H10C10.8 5.2 11.2 5.8 11.2 6.4V10.8H9.4V17H7.2V12.5H5.8V17H3.6V10.8H1.8V6.4C1.8 5.8 2.2 5.2 3 5.2Z" fill="#e8f0ef"/></svg>
<div class="t" style="left:1741.3px;top:160.9px;font-size:16.6px;font-weight:400;color:#e8f0ef;letter-spacing:0.42px;">Rigging</div>
<svg style="left:1820px;top:159px" width="20" height="20" viewBox="0 0 20 20"><circle cx="10" cy="10" r="8.6" fill="none" stroke="#f08f98" stroke-width="1.5"/><path d="M7.85 8.06a2.15 2.15 0 1 1 3.22 2.04c-1.07 0.64-1.07 1.29-1.07 2.79" fill="none" stroke="#f08f98" stroke-width="1.42" stroke-linecap="round"/><circle cx="10" cy="13.87" r="0.83" fill="#f08f98"/></svg>
</body></html>
